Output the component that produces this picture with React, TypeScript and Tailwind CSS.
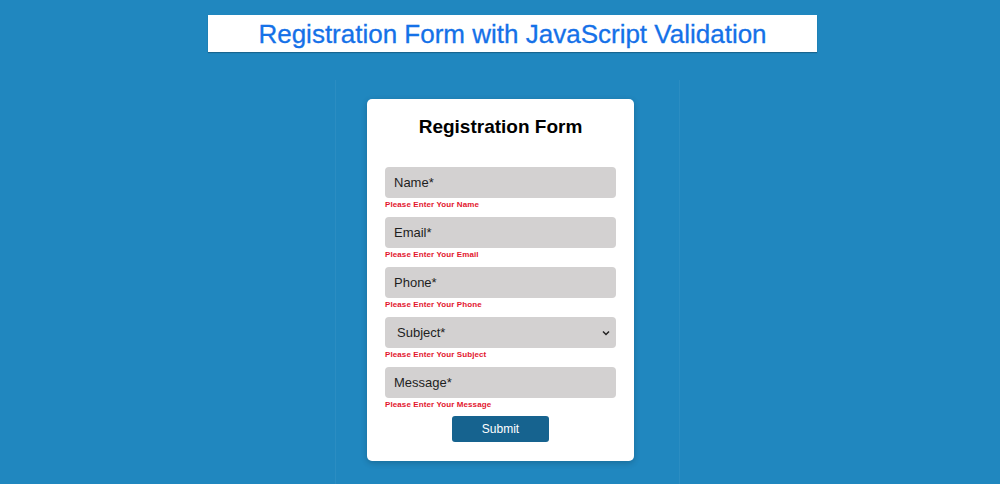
import React from 'react'

const fields = [
  { label: 'Name*', error: 'Please Enter Your Name' },
  { label: 'Email*', error: 'Please Enter Your Email' },
  { label: 'Phone*', error: 'Please Enter Your Phone' },
  { label: 'Subject*', error: 'Please Enter Your Subject', select: true },
  { label: 'Message*', error: 'Please Enter Your Message' },
]

const App = () => {
  return (
    <div className="w-full h-[484px] overflow-hidden bg-[#2087bf] font-['Liberation_Sans',Arial,sans-serif]">
      <div className="pt-[15px]">
        <div className="ml-[208px] w-[609px] h-[37px] bg-white shadow-[0_1px_1px_rgba(0,0,0,0.25)] flex items-center justify-center">
          <h1 className="text-[26px] leading-none text-[#1571e8] [-webkit-text-stroke:0.3px_#1571e8]">Registration Form with JavaScript Validation</h1>
        </div>
      </div>

      <div className="ml-[335px] mt-[28px] w-[345px] h-[404px] border-x border-white/5 pt-[19px]">
        <div className="ml-[31px] w-[267px] bg-white rounded-[5px] shadow-[0_2px_6px_rgba(0,0,0,0.2)] px-[18px] pt-[17px] pb-[19px]">
          <h2 className="text-center text-[19px] font-bold leading-[22px] text-black">Registration Form</h2>
          <div className="mt-[29px] flex flex-col">
            {fields.map((f) => (
              <div key={f.label} className="h-[50px]">
                <div className="h-[31px] rounded-[4px] bg-[#d3d1d1] flex items-center justify-between pr-[4px]">
                  <span className={f.select ? 'pl-[12px] text-[13px] text-[#1e1e1e]' : 'pl-[9px] text-[13px] text-[#1e1e1e]'}>
                    {f.label}
                  </span>
                  {f.select && (
                    <svg width="8" height="6" viewBox="0 0 8 6" className="mr-[2px]">
                      <path d="M1 1.5 L4 4.5 L7 1.5" fill="none" stroke="#222" strokeWidth="1.5" />
                    </svg>
                  )}
                </div>
                <p className="mt-[1px] text-[8px] font-bold leading-[12px] text-[#e3152e] tracking-[0.1px]">{f.error}</p>
              </div>
            ))}
          </div>
          <div className="-mt-[1px] flex justify-center">
            <button className="w-[97px] h-[26px] rounded-[3px] bg-[#16638f] text-white text-[12px]">Submit</button>
          </div>
        </div>
      </div>
    </div>
  )
}

export default App
